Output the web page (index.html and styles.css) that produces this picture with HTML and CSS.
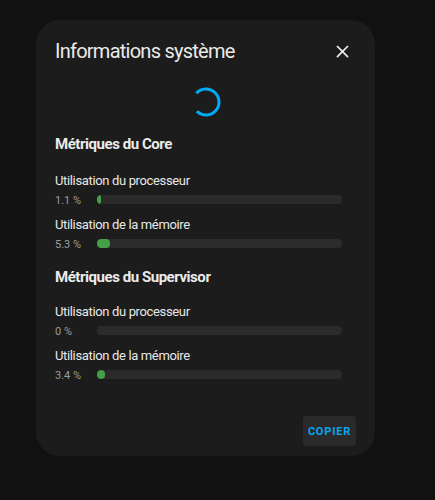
FILE: index.html
```html
<!DOCTYPE html>
<html lang="fr">
<head>
    <meta charset="UTF-8">
    <meta name="viewport" content="width=device-width, initial-scale=1.0">
    <title>Informations système</title>
    <link rel="stylesheet" href="styles.css">
</head>
<body>
    <div class="dialog">
        <div class="dialog-header">
            <h2 class="dialog-title">Informations système</h2>
            <button class="close-btn" aria-label="Fermer">
                <svg viewBox="0 0 24 24" width="21" height="21"><path d="M19,6.41L17.59,5L12,10.59L6.41,5L5,6.41L10.59,12L5,17.59L6.41,19L12,13.41L17.59,19L19,17.59L13.41,12L19,6.41Z" fill="currentColor"/></svg>
            </button>
        </div>

        <div class="spinner">
            <svg viewBox="0 0 30 30" width="30" height="30">
                <circle cx="15" cy="15" r="13" fill="none" stroke="#03a9f4" stroke-width="3" stroke-dasharray="61.5 100" transform="rotate(222 15 15)"/>
            </svg>
        </div>

        <div class="section">
            <h3 class="section-title">Métriques du Core</h3>
            <div class="metric">
                <div class="metric-label">Utilisation du processeur</div>
                <div class="metric-row">
                    <span class="metric-value">1.1 %</span>
                    <div class="bar"><div class="bar-fill" style="width: 1.6%"></div></div>
                </div>
            </div>
            <div class="metric">
                <div class="metric-label">Utilisation de la mémoire</div>
                <div class="metric-row">
                    <span class="metric-value">5.3 %</span>
                    <div class="bar"><div class="bar-fill" style="width: 5.3%"></div></div>
                </div>
            </div>
        </div>

        <div class="section section-second">
            <h3 class="section-title">Métriques du Supervisor</h3>
            <div class="metric">
                <div class="metric-label">Utilisation du processeur</div>
                <div class="metric-row">
                    <span class="metric-value">0 %</span>
                    <div class="bar"><div class="bar-fill" style="width: 0%"></div></div>
                </div>
            </div>
            <div class="metric">
                <div class="metric-label">Utilisation de la mémoire</div>
                <div class="metric-row">
                    <span class="metric-value">3.4 %</span>
                    <div class="bar"><div class="bar-fill" style="width: 3.4%"></div></div>
                </div>
            </div>
        </div>

        <div class="dialog-actions">
            <button class="copy-btn">Copier</button>
        </div>
    </div>
</body>
</html>
```

FILE: styles.css
```css
body {
    margin: 0;
    background: #111111;
    font-family: Roboto, "Noto Sans", sans-serif;
    color: #e1e1e1;
}
.dialog {
    width: 339px;
    box-sizing: border-box;
    margin: 20px 0 0 36px;
    padding: 19px 19px 10px 19px;
    background: #1c1c1c;
    border-radius: 24px;
}
.dialog-header {
    display: flex;
    align-items: center;
    justify-content: space-between;
    height: 24px;
}
.dialog-title {
    margin: 0;
    font-size: 20px;
    font-weight: 400;
    line-height: 24px;
    letter-spacing: -0.75px;
    color: #ebebeb;
}
.close-btn {
    display: flex;
    align-items: center;
    justify-content: center;
    width: 24px;
    height: 24px;
    padding: 0;
    margin-right: 2px;
    margin-top: 1px;
    background: none;
    border: none;
    color: #ebebeb;
    cursor: pointer;
}
.spinner {
    display: flex;
    justify-content: center;
    height: 30px;
    margin-top: 24px;
}
.spinner svg {
    display: block;
}
.section-title {
    margin: 17px 0 0;
    font-size: 15px;
    font-weight: 700;
    line-height: 20px;
    letter-spacing: -0.45px;
    color: #ebebeb;
}
.section-second .section-title {
    margin-top: 15px;
}
.metric {
    margin-top: 8px;
    padding-right: 14px;
}
.section .metric:first-of-type {
    margin-top: 18px;
}
.section-second .metric:first-of-type {
    margin-top: 16px;
}
.metric-label {
    font-size: 13px;
    line-height: 18px;
    letter-spacing: -0.35px;
    color: #e8e8e8;
}
.metric-row {
    display: flex;
    align-items: center;
    height: 18px;
}
.metric-value {
    width: 42px;
    flex-shrink: 0;
    font-size: 11px;
    color: #9b9b9b;
    padding-top: 3px;
}
.bar {
    flex: 1;
    height: 9px;
    background: #2b2b2b;
    border-radius: 4px;
    overflow: hidden;
}
.bar-fill {
    height: 100%;
    background: #43a047;
    border-radius: 4px;
}
.dialog-actions {
    display: flex;
    justify-content: flex-end;
    margin-top: 33px;
}
.copy-btn {
    height: 30px;
    padding: 0 5px;
    background: #2a2a2a;
    border: none;
    border-radius: 4px;
    color: #03a9f4;
    font-family: Roboto, "Noto Sans", sans-serif;
    font-size: 11px;
    font-weight: 700;
    letter-spacing: 0.8px;
    text-transform: uppercase;
    cursor: pointer;
}
```
